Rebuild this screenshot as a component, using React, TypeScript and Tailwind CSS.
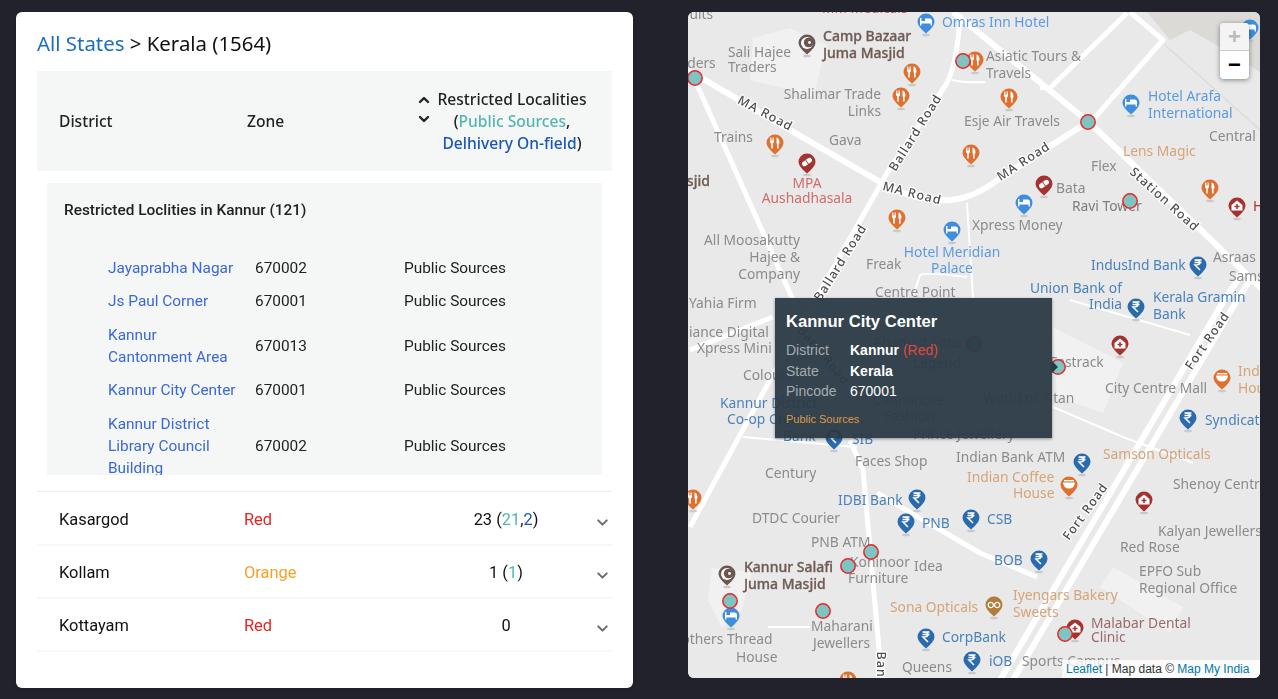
import React from "react";
import { ChevronDown, ChevronUp } from "lucide-react";

type L = [string, number, number, string?, string?];
const G = "#8b8b8b", B = "#6f5b55", H = "#5b9ae0", K = "#4a82bb", T = "#d6a478", R = "#cf6d6d", D = "#9a6a6a";

const labels: L[] = [
  ["fruits", 679, 19, G], ["MM Medicals", 822, 13, "#c9605f"], ["Omras Inn Hotel", 942, 27, H],
  ["Camp Bazaar", 823, 41, B], ["Juma Masjid", 823, 58, B], ["Sali Hajee", 728, 57, G], ["Traders", 728, 72, G],
  ["Traders", 667, 68, G], ["Asiatic Tours &", 986, 61, G], ["Travels", 986, 78, G],
  ["Shalimar Trade", 881, 99, G, "end"], ["Links", 881, 116, G, "end"], ["Hotel Arafa", 1148, 101, H], ["International", 1148, 118, H],
  ["Esje Air Travels", 964, 126, G], ["Gava", 829, 145, G], ["Trains", 714, 142, G], ["Central", 1209, 141, G],
  ["Lens Magic", 1123, 156, T], ["Flex", 1091, 171, G], ["Bata", 1056, 193, G], ["Ravi Tower", 1072, 211, "#7c7c7c"],
  ["Masjid", 666, 186, B], ["MPA", 807, 188, R, "middle"], ["Aushadhasala", 807, 203, R, "middle"],
  ["Xpress Money", 972, 230, G], ["Hotel Meridian", 952, 257, H, "middle"], ["Palace", 952, 273, H, "middle"],
  ["All Moosakutty", 800, 245, G, "end"], ["Hajee &", 800, 262, G, "end"], ["Company", 800, 279, G, "end"],
  ["Freak", 866, 269, G], ["Centre Point", 875, 297, G], ["IndusInd Bank", 1091, 270, K], ["Asraas", 1213, 262, G], ["Samsung", 1229, 281, G],
  ["Union Bank of", 1030, 293, K], ["India", 1089, 309, K], ["Kerala Gramin", 1153, 302, K], ["Bank", 1153, 319, K],
  ["Yahia Firm", 689, 308, G], ["Reliance Digital", 669, 337, G], ["Xpress Mini", 697, 353, G], ["Colours", 743, 380, G],
  ["Kannur District", 720, 408, K], ["Co-op Credit", 727, 424, K], ["Bank", 783, 441, K], ["SIB", 852, 444, K],
  ["Ahamed Sons", 873, 347, G], ["Legend", 913, 368, G], ["Cannanore", 873, 405, G], ["Fashion", 884, 421, G], ["Prince Jewellery", 913, 439, G],
  ["World of Titan", 983, 403, G], ["Fastrack", 1050, 367, G], ["City Centre Mall", 1105, 393, G], ["Indian", 1238, 376, T], ["House", 1238, 393, T],
  ["Syndicate", 1205, 425, K], ["Faces Shop", 855, 466, G], ["Century", 765, 478, G], ["Indian Bank ATM", 956, 462, G],
  ["Indian Coffee", 967, 482, T], ["House", 1013, 498, T], ["Samson Opticals", 1103, 459, T], ["Shenoy Centre", 1173, 489, G],
  ["IDBI Bank", 838, 505, K], ["PNB", 922, 528, K], ["CSB", 987, 524, K], ["DTDC Courier", 752, 523, G], ["PNB ATM", 811, 547, G],
  ["BOB", 994, 565, K], ["Kohinoor", 850, 567, G], ["Idea", 914, 571, G], ["Furniture", 848, 583, G], ["Kalyan Jewellers", 1158, 536, G],
  ["Red Rose", 1120, 552, G], ["EPFO Sub", 1139, 576, G], ["Regional Office", 1139, 593, G], ["Kannur Salafi", 744, 572, B], ["Juma Masjid", 744, 589, B],
  ["Sona Opticals", 890, 612, T], ["Iyengars Bakery", 1013, 600, T], ["Sweets", 1013, 617, T], ["Malabar Dental", 1091, 628, D], ["Clinic", 1091, 642, D],
  ["Maharani", 811, 631, G], ["Jewellers", 813, 648, G], ["Brothers Thread", 667, 644, G], ["House", 736, 662, G], ["CorpBank", 942, 642, K],
  ["Queens", 902, 672, G], ["iOB", 989, 666, K], ["Sports Campus", 1022, 666, G], ["H", 1253, 211, "#a8322f"],
];

const roadLabels: [string, number, number, number][] = [
  ["MA Road", 765, 114, 28], ["MA Road", 912, 194, 14], ["Ballard Road", 916, 133, -58], ["Ballard Road", 841, 263, -58],
  ["MA Road", 1024, 162, -33], ["Station Road", 1164, 200, 42], ["Fort Road", 1208, 341, -55], ["Fort Road", 1086, 512, -54],
  ["Bank Road", 823, 356, 50], ["Bank Road", 880, 688, 90],
];

const roads: [string, number][] = [
  ["M688 70 L790 130 L880 182 Q915 202 950 200 Q975 198 1000 178 L1088 122", 6],
  ["M694 78 L793 300 L800 318", 5],
  ["M690 350 L773 317", 5],
  ["M960 14 Q958 60 947 83 L887 173 L770 380 L690 527", 5],
  ["M953 12 L1090 123 L1262 289", 6],
  ["M1090 123 L1163 40 L1130 12", 5],
  ["M1050 88 L1127 13", 5],
  ["M1040 88 L1050 88", 4],
  ["M952 80 Q965 83 985 82", 2],
  ["M967 203 L973 298", 2],
  ["M913 297 L920 275 Q925 272 967 277", 2],
  ["M1000 680 L1220 307 L1244 270", 6],
  ["M1013 680 L1233 307 L1250 280", 6],
  ["M850 440 L863 470 L880 660", 5],
  ["M743 437 L857 447", 2],
  ["M877 493 L980 553 L1037 577", 5],
  ["M1053 407 L1123 437 L1193 463", 2],
  ["M1070 300 L1190 335", 2],
  ["M768 627 L810 627", 2],
];

const blocks = [
  "753,38 790,28 827,45 813,97 783,88 750,80",
  "712,568 752,572 742,610 722,628 708,600",
  "1113,567 1183,607 1170,633 1100,587",
  "1053,327 1123,363 1103,413 1057,397",
];

const markers: [number, number][] = [
  [695, 78], [963, 61], [1088, 122], [1130, 201], [974, 344], [1058, 367], [871, 552], [848, 566], [730, 601], [823, 611], [1065, 634],
];

type Kind = "fork" | "hotel" | "rupee" | "pharm" | "hosp" | "coffee" | "glasses" | "mosque";
const pinColor: Record<Kind, string> = {
  fork: "#df7130", hotel: "#3f8ede", rupee: "#2a6bad", pharm: "#a5322f", hosp: "#a5322f", coffee: "#df7130", glasses: "#b37c3d", mosque: "#6b5750",
};
const pins: [Kind, number, number][] = [
  ["fork", 912, 72], ["fork", 901, 96], ["fork", 775, 143], ["fork", 971, 153], ["fork", 897, 218], ["fork", 975, 60], ["fork", 1009, 97], ["fork", 1210, 188], ["fork", 693, 498], ["fork", 848, 680],
  ["hotel", 926, 22], ["hotel", 1131, 103], ["hotel", 1024, 203], ["hotel", 952, 230], ["hotel", 731, 616], ["hotel", 1250, 28],
  ["rupee", 1198, 265], ["rupee", 1136, 307], ["rupee", 834, 438], ["rupee", 1188, 418], ["rupee", 1082, 462], ["rupee", 917, 498], ["rupee", 906, 522], ["rupee", 971, 518], ["rupee", 1039, 559], ["rupee", 926, 637], ["rupee", 972, 660],
  ["pharm", 807, 162], ["pharm", 1044, 184],
  ["hosp", 1237, 206], ["hosp", 1120, 344], ["hosp", 1144, 500], ["hosp", 1075, 628],
  ["coffee", 1222, 378], ["coffee", 1069, 485], ["glasses", 994, 605], ["mosque", 807, 43], ["mosque", 727, 574],
];

function Glyph({ kind }: { kind: Kind }) {
  const w = "#ffffff";
  switch (kind) {
    case "fork":
      return (
        <g fill={w}>
          <path d="M-5 -5.5 H-4.2 V-2.5 H-3.4 V-5.5 H-2.6 V-2.5 H-1.8 V-5.5 H-1 V-1 Q-1 0 -2.2 0.4 V5.5 H-3.8 V0.4 Q-5 0 -5 -1 Z" />
          <path d="M1.5 -5.5 Q4.5 -5 4.5 0.5 H3.6 V5.5 H2 V0.5 H1.5 Z" />
        </g>
      );
    case "hotel":
      return <path d="M-6 3.5 V-4 H-4.6 V-1 H-1 V-3.5 H4 Q6 -3.5 6 -1 V3.5 H4.6 V1.5 H-4.6 V3.5 Z" fill={w} />;
    case "rupee":
      return <path d="M-3.5 -5 H3.5 M-3.5 -2.5 H3.5 M-3 -5 Q2 -5 2 -2.5 Q2 0 -3 0 L2 5" stroke={w} strokeWidth="1.5" fill="none" />;
    case "pharm":
      return <g transform="rotate(-35)"><rect x="-5.5" y="-2.5" width="11" height="5" rx="2.5" fill={w} /><rect x="-0.4" y="-3" width="0.8" height="6" fill={pinColor.pharm} /></g>;
    case "hosp":
      return <g><path d="M0 -5.5 L5.5 -1 V4.5 H-5.5 V-1 Z" fill={w} /><path d="M0 -2 V3 M-2.5 0.5 H2.5" stroke={pinColor.hosp} strokeWidth="1.5" /></g>;
    case "coffee":
      return <g><path d="M-6 -2.5 H6 Q5.5 3.5 0 3.5 Q-5.5 3.5 -6 -2.5 Z" fill={w} /><rect x="-5" y="-5" width="10" height="1.4" fill={w} /></g>;
    case "glasses":
      return <g fill="none" stroke={w} strokeWidth="1.3"><circle cx="-3.2" cy="0" r="2.6" /><circle cx="3.2" cy="0" r="2.6" /></g>;
    case "mosque":
      return <g><circle cx="0" cy="0" r="6" fill={w} /><circle cx="1.6" cy="-0.5" r="4.8" fill={pinColor.mosque} /><circle cx="2.5" cy="-0.5" r="1.4" fill={w} /></g>;
  }
}

function Pin({ kind, x, y }: { kind: Kind; x: number; y: number }) {
  const c = pinColor[kind];
  return (
    <g transform={`translate(${x} ${y})`}>
      <ellipse cx="0" cy="13" rx="4" ry="1.3" fill="#c9c9c9" />
      <path d="M-8.5 0 A8.5 8.5 0 1 1 8.5 0 Q8 5 0 11.5 Q-8 5 -8.5 0 Z" fill={c} />
      <Glyph kind={kind} />
    </g>
  );
}

function MapCanvas() {
  return (
    <svg viewBox="688 12 572 666" className="block h-[666px] w-[572px] blur-[0.5px]" fontFamily="'Noto Sans', sans-serif" fontSize="13.8">
      <rect x="688" y="12" width="572" height="666" fill="#e9e9e9" />
      <polygon points="1147,12 1260,12 1260,72 1213,43 1190,30 1170,40" fill="#dcdad7" />
      <path d="M1165 45 L1260 130" stroke="#dcdcdc" strokeWidth="1.5" fill="none" />
      {blocks.map((p) => <polygon key={p} points={p} fill="#f1f1f1" />)}
      <g fill="none" stroke="#ffffff" strokeLinejoin="round">
        {roads.map(([d, w]) => <path key={d} d={d} strokeWidth={w} />)}
      </g>
      {labels.map(([t, x, y, c, a]) => (
        <text
          key={t + x + y}
          x={x}
          y={y}
          fill={c}
          textAnchor={(a as "end" | "middle") ?? "start"}
          fontSize={c === B ? 14 : undefined}
          fontWeight={c === B ? 500 : undefined}
          stroke={c === B ? B : undefined}
          strokeWidth={c === B ? 0.3 : undefined}
        >
          {t}
        </text>
      ))}
      {roadLabels.map(([t, x, y, r]) => (
        <text key={t + x} x={x} y={y} transform={`rotate(${r} ${x} ${y})`} textAnchor="middle" dominantBaseline="middle" fontSize="12.5" fontWeight="500" letterSpacing="1" fill="#4f4f4f" stroke="#ffffff" strokeWidth="2.5" paintOrder="stroke">{t}</text>
      ))}
      {pins.map(([k, x, y]) => <Pin key={k + x} kind={k} x={x} y={y} />)}
      {markers.map(([x, y]) => <circle key={x} cx={x} cy={y} r="7.2" fill="#7dc4c2" stroke="#e9272a" strokeWidth="1.5" />)}
    </svg>
  );
}

const rows: [string, string, string, string][] = [
  ["Jayaprabha Nagar", "670002", "Public Sources", "py-[5.5px]"],
  ["Js Paul Corner", "670001", "Public Sources", "py-[5.5px]"],
  ["Kannur Cantonment Area", "670013", "Public Sources", "pt-[6.5px] pb-[5.5px]"],
  ["Kannur City Center", "670001", "Public Sources", "py-[5.5px]"],
  ["Kannur District Library Council Building", "670002", "Public Sources", "pt-[6.5px] pb-[5.5px]"],
];

function District({ name, zone, zoneClass, children }: { name: string; zone: string; zoneClass: string; children: React.ReactNode }) {
  return (
    <div className="flex h-[53px] items-center border-b-2 border-[#f6f7f7] pt-[4px] pl-[22px] text-[16.4px] text-[#111111]">
      <div className="w-[185px]">{name}</div>
      <div className={`w-[182px] ${zoneClass}`}>{zone}</div>
      <div className="w-[160px] text-center">{children}</div>
      <ChevronDown className="mt-[3px] ml-[8px] h-[17px] w-[17px] text-[#6b6b6b]" strokeWidth={2.8} />
    </div>
  );
}

export default function App() {
  return (
    <div className="flex h-[699px] w-[1278px] items-start gap-[55px] overflow-hidden bg-[#21222c] pt-[12px] pl-[16px]">
      <div className="h-[676px] w-[617px] shrink-0 rounded-[6px] bg-white px-[21px] font-['Roboto',sans-serif] shadow-sm blur-[0.3px]">
        <h1 className="pt-[17px] font-['Noto_Sans',sans-serif] text-[20.4px] leading-[28px] text-[#111111]">
          <span className="text-[#1b6ec2]">All States</span> &gt; Kerala (1564)
        </h1>
        <div className="mt-[14px] flex h-[100px] items-center bg-[#f5f7f6] pl-[22px] font-['Noto_Sans',sans-serif] text-[15.6px] font-medium leading-[22px] text-[#222222]">
          <div className="w-[188px]">District</div>
          <div className="w-[170px]">Zone</div>
          <div className="flex w-[175px]">
            <div className="mr-[6px] flex w-[14px] flex-col items-center">
              <ChevronUp className="mt-[3px] h-[16px] w-[16px]" strokeWidth={3.6} />
              <ChevronDown className="mt-[3px] h-[16px] w-[16px]" strokeWidth={3.6} />
            </div>
            <div className="-mt-[1px] w-[150px] whitespace-nowrap text-center">
              <div>Restricted Localities</div>
              <div>(<span className="text-[#52b5af]">Public Sources</span>,</div>
              <div><span className="text-[#1a56b8]">Delhivery On-field</span>)</div>
            </div>
          </div>
        </div>
        <div className="mx-[10px] mt-[12px] h-[292px] overflow-hidden bg-[#f5f7f6] pl-[17px] text-[15.4px] leading-[22px] text-[#222222]">
          <div className="pt-[16px] text-[15.4px] font-medium text-[#222222]">Restricted Loclities in Kannur (121)</div>
          <div className="mt-[30px]">
            {rows.map(([a, b, c, p]) => (
              <div key={a} className={`grid grid-cols-[147px_149px_1fr] items-center pl-[44px] ${p}`}>
                <div className="pr-[16px] text-[#3b67d9]">{a}</div>
                <div>{b}</div>
                <div>{c}</div>
              </div>
            ))}
          </div>
        </div>
        <div className="mt-[16px] mb-[1px] h-[1px] rounded-full bg-[#ececec]" />
        <District name="Kasargod" zone="Red" zoneClass="text-[#e8231f]">
          23 (<span className="text-[#52b5af]">21</span>,<span className="text-[#1a56b8]">2</span>)
        </District>
        <District name="Kollam" zone="Orange" zoneClass="text-[#f5a225]">
          1 (<span className="text-[#52b5af]">1</span>)
        </District>
        <District name="Kottayam" zone="Red" zoneClass="text-[#e8231f]">0</District>
      </div>

      <div className="relative h-[666px] w-[572px] shrink-0 overflow-hidden rounded-[6px] bg-[#e9e9e9]">
        <MapCanvas />
        <div className="absolute top-[11px] left-[532px] flex h-[56px] w-[29px] flex-col overflow-hidden rounded-[4px] bg-white font-['Liberation_Sans',sans-serif] shadow-[0_1px_5px_rgba(0,0,0,0.45)]">
          <div className="flex h-[28px] items-center justify-center border-b border-[#cccccc] bg-[#f4f4f4] text-[22px] font-bold leading-none text-[#bbbbbb]">+</div>
          <div className="flex flex-1 items-center justify-center text-[22px] font-bold leading-none text-black">−</div>
        </div>
        <div className="absolute right-0 bottom-0 flex h-[18px] w-[198px] items-center bg-white/80 pl-[4px] font-['Liberation_Sans',sans-serif] text-[12px] text-[#333333]">
          <span className="text-[#0078a8]">Leaflet</span>&nbsp;| Map data ©&nbsp;<span className="text-[#0078a8]">Map My India</span>
        </div>
        <div className="absolute top-[286px] left-[87px] h-[140px] w-[277px] bg-[#2a3a45]/95 pl-[11px] font-['Liberation_Sans',sans-serif] text-white shadow-[0_1px_3px_rgba(0,0,0,0.4)]">
          <div className="pt-[14px] text-[16.6px] font-bold leading-[20px]">Kannur City Center</div>
          <div className="mt-[8px] text-[14px] leading-[20.5px]">
            <div className="flex"><span className="w-[64px] text-[#a5acb1]">District</span><span><b>Kannur</b> <span className="text-[#e0483e]">(Red)</span></span></div>
            <div className="flex"><span className="w-[64px] text-[#a5acb1]">State</span><b>Kerala</b></div>
            <div className="flex"><span className="w-[64px] text-[#a5acb1]">Pincode</span><span>670001</span></div>
          </div>
          <div className="mt-[10px] text-[11px] leading-[14px] text-[#dd9a4c]">Public Sources</div>
          <div className="absolute top-[63px] left-[277px] h-0 w-0 border-y-[6px] border-l-[6px] border-y-transparent border-l-[#2a3a45]" />
        </div>
      </div>
    </div>
  );
}
